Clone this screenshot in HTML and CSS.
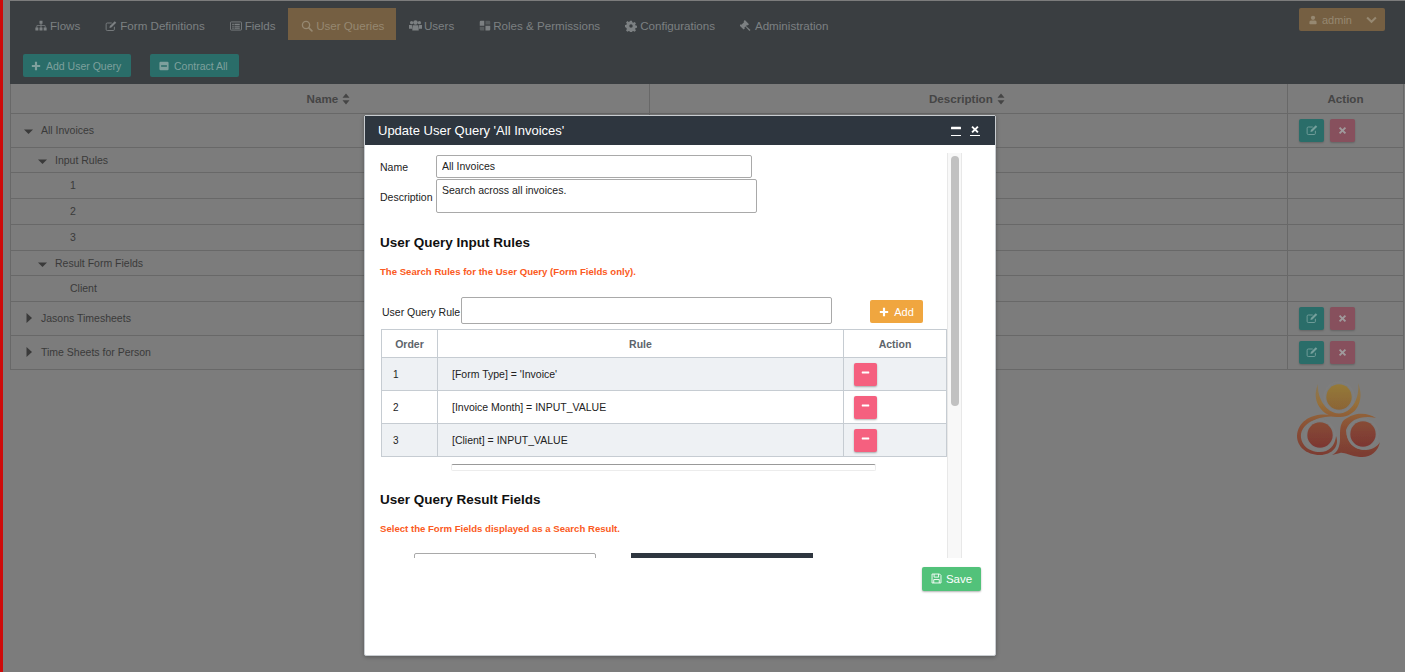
FILE: index.html
```html
<!DOCTYPE html>
<html lang="en">
<head>
    <meta charset="UTF-8">
    <title>User Queries</title>
    <link rel="stylesheet" href="styles.css">
</head>
<body>
    <svg class="defs" width="0" height="0">
        <symbol id="i-sitemap" viewBox="0 0 16 16"><path fill="currentColor" d="M6 1h4v4H8.600v2H13a1 1 0 0 1 1 1v2h1.500v4h-4v-4H13V8H8.600v2H10v4H6v-4h1.400V8H3v2h1.500v4h-4v-4H2V8a1 1 0 0 1 1-1h4.400V5H6z"/></symbol>
        <symbol id="i-edit" viewBox="0 0 16 16"><path fill="none" stroke="currentColor" stroke-width="1.200" d="M12.500 9v3.500a1.500 1.500 0 0 1-1.500 1.500H3a1.500 1.500 0 0 1-1.500-1.500v-7A1.500 1.500 0 0 1 3 4h6"/><path fill="currentColor" d="M13 1.500l2 2-6.500 6.500-2.600.6.600-2.600z"/></symbol>
        <symbol id="i-list" viewBox="0 0 16 16"><path fill="none" stroke="currentColor" stroke-width="1.200" d="M1.600 2.600h12.800a1 1 0 0 1 1 1v8.800a1 1 0 0 1-1 1H1.600a1 1 0 0 1-1-1V3.600a1 1 0 0 1 1-1z"/><path fill="currentColor" d="M3 5h2v1.500H3zM6 5h7v1.500H6zM3 7.500h2V9H3zM6 7.500h7V9H6zM3 10h2v1.500H3zM6 10h7v1.500H6z"/></symbol>
        <symbol id="i-search" viewBox="0 0 16 16"><circle cx="6.700" cy="6.700" r="4.800" fill="none" stroke="currentColor" stroke-width="1.800"/><path stroke="currentColor" stroke-width="2.200" stroke-linecap="round" d="M10.500 10.500L14.500 14.500"/></symbol>
        <symbol id="i-users" viewBox="0 0 16 16"><circle cx="3.200" cy="4.500" r="2"/><circle cx="12.800" cy="4.500" r="2"/><circle cx="8" cy="4.300" r="2.800"/><path d="M0 7.500h3.500L4 12H0zM16 7.500h-3.500L12 12h4zM4.500 7.800h7L12 14H4z"/></symbol>
        <symbol id="i-roles" viewBox="0 0 16 16"><path fill="currentColor" d="M1 2.500a1.500 1.500 0 0 1 1.500-1.500H7v6.500H1zM8.600 7.500H15v5a1.500 1.500 0 0 1-1.500 1.500H8.600z"/><path fill="currentColor" opacity=".45" d="M8.600 1h4.900A1.500 1.500 0 0 1 15 2.500V6H8.600zM1 9h6v5H2.500A1.500 1.500 0 0 1 1 12.500z"/></symbol>
        <symbol id="i-cog" viewBox="0 0 16 16"><path fill="currentColor" fill-rule="evenodd" d="M6.700 1h2.600l.4 2 1.300.6 1.800-1.100 1.800 1.800-1.100 1.800.6 1.300 1.900.4v2.600l-1.900.4-.6 1.300 1.100 1.800-1.800 1.800-1.800-1.100-1.300.5-.4 2H6.700l-.4-2-1.300-.5-1.800 1.100-1.800-1.800 1.100-1.800-.6-1.300L0 9.300V6.700l1.900-.4.600-1.300-1.100-1.800 1.800-1.800 1.800 1.100 1.300-.6zM8 5.700a2.300 2.300 0 1 0 0 4.600 2.300 2.300 0 0 0 0-4.600z"/></symbol>
        <symbol id="i-gavel" viewBox="0 0 16 16"><path fill="currentColor" d="M6.500 0l5.500 5.500-1.800 1.800-.8-.8-1.400 1.400 6 5.300-1.500 1.600-5.300-6-1.400 1.400.8.800L4.800 12.800-.7 7.300l1.800-1.800.8.800 3.700-3.700-.8-.8z"/></symbol>
        <symbol id="i-plus" viewBox="0 0 12 12"><path fill="currentColor" d="M4.700 1h2.600v3.700H11v2.600H7.300V11H4.700V7.300H1V4.700h3.700z"/></symbol>
        <symbol id="i-minus" viewBox="0 0 12 12"><rect x="1" y="4.800" width="10" height="2.400" rx=".5" fill="currentColor"/></symbol>
        <symbol id="i-minus-box" viewBox="0 0 12 12"><path fill="currentColor" fill-rule="evenodd" d="M2 1h8a1.500 1.500 0 0 1 1.500 1.500v7A1.500 1.500 0 0 1 10 11H2A1.500 1.500 0 0 1 .5 9.500v-7A1.500 1.500 0 0 1 2 1zm.5 4v2h7V5z"/></symbol>
        <symbol id="i-times" viewBox="0 0 12 12"><path fill="currentColor" d="M3 1.200L6 4.200l3-3L10.800 3l-3 3 3 3L9 10.800l-3-3-3 3L1.200 9l3-3-3-3z"/></symbol>
        <symbol id="i-user" viewBox="0 0 12 14"><circle cx="6" cy="3.800" r="3.200" fill="currentColor"/><path fill="currentColor" d="M1 8.500c1-.8 2.500-.9 5-.9s4 .1 5 .9l.5 3.500a1.500 1.500 0 0 1-1.500 1.500H2A1.500 1.500 0 0 1 .5 12z"/></symbol>
        <symbol id="i-chevron" viewBox="0 0 12 8"><path fill="none" stroke="currentColor" stroke-width="2.200" d="M1.200 1.200L6 6l4.800-4.800"/></symbol>
        <symbol id="i-sort" viewBox="0 0 8 12"><path fill="currentColor" d="M4 .5L7.500 4.800H.5zM4 11.500L.5 7.200h7z"/></symbol>
        <symbol id="i-down" viewBox="0 0 10 6" preserveAspectRatio="none"><path fill="currentColor" d="M0 .5h10L5 6z"/></symbol>
        <symbol id="i-right" viewBox="0 0 6 10" preserveAspectRatio="none"><path fill="currentColor" d="M.5 0L6 5 .5 10z"/></symbol>
        <symbol id="i-save" viewBox="0 0 16 16"><path fill="none" stroke="currentColor" stroke-width="1.300" d="M1.500 1.500h11l2 2v11h-13z"/><path fill="none" stroke="currentColor" stroke-width="1.300" d="M4.500 1.500v4.500h6.500V1.500M4 14.500V9.500h8v5"/></symbol>
    </svg>

    <div class="red-strip"></div>

    <div class="page">
        <div class="topbar">
            <div class="nav-row">
                <nav class="nav">
                    <a class="nav-item"><svg class="ico"><use href="#i-sitemap"/></svg>Flows</a>
                    <a class="nav-item"><svg class="ico"><use href="#i-edit"/></svg>Form Definitions</a>
                    <a class="nav-item"><svg class="ico"><use href="#i-list"/></svg>Fields</a>
                    <a class="nav-item active"><svg class="ico"><use href="#i-search"/></svg>User Queries</a>
                    <a class="nav-item"><svg class="ico ico-users"><use href="#i-users"/></svg>Users</a>
                    <a class="nav-item nav-roles"><svg class="ico"><use href="#i-roles"/></svg>Roles &amp; Permissions</a>
                    <a class="nav-item"><svg class="ico"><use href="#i-cog"/></svg>Configurations</a>
                    <a class="nav-item"><svg class="ico"><use href="#i-gavel"/></svg>Administration</a>
                </nav>
                <button class="admin-btn">
                    <svg class="ico-user"><use href="#i-user"/></svg>
                    <span class="admin-name">admin</span>
                    <svg class="ico-chevron"><use href="#i-chevron"/></svg>
                </button>
            </div>
            <div class="tool-row">
                <button class="tool-btn tool-add"><svg class="ico-sm"><use href="#i-plus"/></svg>Add User Query</button>
                <button class="tool-btn tool-contract"><svg class="ico-sm"><use href="#i-minus-box"/></svg>Contract All</button>
            </div>
        </div>

        <table class="grid">
            <colgroup>
                <col class="col-name"><col class="col-desc"><col class="col-act">
            </colgroup>
            <thead>
                <tr>
                    <th class="sortable">Name <svg class="sort"><use href="#i-sort"/></svg></th>
                    <th class="sortable">Description <svg class="sort"><use href="#i-sort"/></svg></th>
                    <th>Action</th>
                </tr>
            </thead>
            <tbody>
                <tr class="row-top">
                    <td class="lvl-1"><svg class="caret"><use href="#i-down"/></svg>All Invoices</td><td></td>
                    <td class="act"><button class="act-btn act-edit"><svg><use href="#i-edit"/></svg></button><button class="act-btn act-del"><svg><use href="#i-times"/></svg></button></td>
                </tr>
                <tr class="row-group"><td class="lvl-2"><svg class="caret"><use href="#i-down"/></svg>Input Rules</td><td></td><td></td></tr>
                <tr class="row-leaf"><td class="lvl-3">1</td><td></td><td></td></tr>
                <tr class="row-leaf"><td class="lvl-3">2</td><td></td><td></td></tr>
                <tr class="row-leaf"><td class="lvl-3">3</td><td></td><td></td></tr>
                <tr class="row-group"><td class="lvl-2"><svg class="caret"><use href="#i-down"/></svg>Result Form Fields</td><td></td><td></td></tr>
                <tr class="row-leaf"><td class="lvl-3">Client</td><td></td><td></td></tr>
                <tr class="row-top">
                    <td class="lvl-1"><svg class="caret-r"><use href="#i-right"/></svg>Jasons Timesheets</td><td></td>
                    <td class="act"><button class="act-btn act-edit"><svg><use href="#i-edit"/></svg></button><button class="act-btn act-del"><svg><use href="#i-times"/></svg></button></td>
                </tr>
                <tr class="row-top">
                    <td class="lvl-1"><svg class="caret-r"><use href="#i-right"/></svg>Time Sheets for Person</td><td></td>
                    <td class="act"><button class="act-btn act-edit"><svg><use href="#i-edit"/></svg></button><button class="act-btn act-del"><svg><use href="#i-times"/></svg></button></td>
                </tr>
            </tbody>
        </table>

        <div class="logo-row">
            <svg class="logo" viewBox="0 0 90 80">
                <defs>
                    <linearGradient id="swirl" gradientUnits="userSpaceOnUse" x1="0" y1="0" x2="0" y2="78">
                        <stop offset="0" stop-color="#85785e"/>
                        <stop offset=".3" stop-color="#96703a"/>
                        <stop offset=".6" stop-color="#8a5036"/>
                        <stop offset="1" stop-color="#7b3a32"/>
                    </linearGradient>
                    <linearGradient id="ball-top" x1="0" y1="0" x2="0" y2="1">
                        <stop offset="0" stop-color="#957a38"/>
                        <stop offset="1" stop-color="#8b6436"/>
                    </linearGradient>
                    <linearGradient id="ball-low" x1="0" y1="0" x2="0" y2="1">
                        <stop offset="0" stop-color="#874c36"/>
                        <stop offset="1" stop-color="#7c3632"/>
                    </linearGradient>
                    <filter id="soft"><feGaussianBlur stdDeviation=".5"/></filter>
                </defs>
                <g filter="url(#soft)">
                    <path fill="url(#swirl)" d="M24 4C16 22 30 38 45 37 60 38 72 22 64 3 66 18 58 33 45 33.500 32 33 23 18 24 4z"/>
                    <path fill="url(#swirl)" d="M3 56C4 38 24 30 46 37 30 35 10 40 7 54 6 64 14 72 26 72 35 72 41 66 42 56 46 66 38 75 26 75 12 75 3 66 3 56z"/>
                    <path fill="url(#swirl)" d="M50 40C62 31 74 33 82 38 70 35 56 38 52 50 52 62 60 70 72 70 78 70 84 66 86 62 84 72 76 78 66 77 56 76 50 72 46 73L38 75C44 72 46 66 46 58 46 50 46 44 50 40z"/>
                    <circle cx="45" cy="17" r="14.800" fill="none" stroke="#7e7e7e" stroke-width="1.800"/>
                    <circle cx="26" cy="55" r="14.800" fill="none" stroke="#7e7e7e" stroke-width="1.800"/>
                    <circle cx="69" cy="54" r="14.800" fill="none" stroke="#7e7e7e" stroke-width="1.800"/>
                    <circle cx="45" cy="17" r="12.700" fill="url(#ball-top)"/>
                    <circle cx="26" cy="55" r="12.700" fill="url(#ball-low)"/>
                    <circle cx="69" cy="54" r="12.700" fill="url(#ball-low)"/>
                </g>
            </svg>
        </div>
    </div>

    <div class="modal">
        <div class="modal-head">
            <span class="modal-title">Update User Query 'All Invoices'</span>
            <span class="modal-ctrl ctrl-min"><svg><use href="#i-minus"/></svg></span>
            <span class="modal-ctrl"><svg><use href="#i-times"/></svg></span>
        </div>
        <div class="modal-scroll">
            <div class="form-line">
                <label class="lbl">Name</label>
                <input class="inp inp-name" type="text" value="All Invoices">
            </div>
            <div class="form-line form-line-desc">
                <label class="lbl">Description</label>
                <textarea class="inp inp-desc">Search across all invoices.</textarea>
            </div>

            <h3 class="sec-title sec-rules">User Query Input Rules</h3>
            <p class="sec-note note-rules">The Search Rules for the User Query (Form Fields only).</p>

            <div class="rule-line">
                <label class="lbl-rule">User Query Rule</label>
                <input class="inp inp-rule" type="text">
                <button class="add-btn"><svg><use href="#i-plus"/></svg>Add</button>
            </div>

            <table class="rules">
                <colgroup>
                    <col class="r-order"><col class="r-rule"><col class="r-act">
                </colgroup>
                <thead>
                    <tr><th>Order</th><th>Rule</th><th>Action</th></tr>
                </thead>
                <tbody>
                    <tr class="odd"><td class="r-num">1</td><td class="r-text">[Form Type] = 'Invoice'</td><td class="r-btn"><button class="rm-btn"><svg><use href="#i-minus"/></svg></button></td></tr>
                    <tr><td class="r-num">2</td><td class="r-text">[Invoice Month] = INPUT_VALUE</td><td class="r-btn"><button class="rm-btn"><svg><use href="#i-minus"/></svg></button></td></tr>
                    <tr class="odd"><td class="r-num">3</td><td class="r-text">[Client] = INPUT_VALUE</td><td class="r-btn"><button class="rm-btn"><svg><use href="#i-minus"/></svg></button></td></tr>
                </tbody>
            </table>

            <div class="thin-select"></div>

            <h3 class="sec-title sec-result">User Query Result Fields</h3>
            <p class="sec-note note-result">Select the Form Fields displayed as a Search Result.</p>

            <div class="pick-row">
                <div class="pick-list"></div>
                <div class="pick-head"></div>
            </div>

            <div class="scroll-track"><div class="scroll-thumb"></div></div>
        </div>
        <div class="modal-foot">
            <button class="save-btn"><svg><use href="#i-save"/></svg>Save</button>
        </div>
    </div>
</body>
</html>
```

FILE: styles.css
```css
* {
    box-sizing: border-box;
}
html, body {
    height: 100%;
}
body {
    margin: 0;
    display: flex;
    overflow: hidden;
    background-color: #7c7c7c;
    font-family: "Liberation Sans", Arial, sans-serif;
    font-size: 10.5px;
    color: #3a3a3a;
}
button {
    font-family: inherit;
    border: none;
    padding: 0;
}
.defs {
    position: absolute;
}
.red-strip {
    width: 3px;
    flex: none;
    background-color: #cf0a0a;
}
.page {
    flex: 1;
    min-width: 0;
    padding: 1px 2px 0 7px;
}

/* top bar */
.topbar {
    height: 83px;
    margin-right: -2px;
    background-color: #3a3e41;
}
.nav-row {
    display: flex;
    justify-content: space-between;
    padding-top: 7px;
    height: 53px;
}
.nav {
    display: flex;
    height: 32px;
    padding-left: 12.5px;
}
.nav-item {
    display: flex;
    align-items: center;
    padding: 3px 12.5px 0;
    font-size: 11.6px;
    color: #7c8082;
    white-space: nowrap;
}
.nav-item.active {
    padding-left: 13px;
    padding-right: 12px;
    background-color: #755f42;
    color: #968871;
}
.ico {
    width: 12px;
    height: 12px;
    margin-right: 3px;
    fill: currentColor;
}
.ico-users {
    width: 13px;
    height: 13px;
    margin-right: 2px;
}
.nav-roles .ico {
    margin-right: 2px;
}
.admin-btn {
    display: flex;
    align-items: center;
    width: 86px;
    height: 23px;
    margin-right: 20px;
    padding-left: 10px;
    background-color: #755f42;
    border-radius: 2px;
    color: #968871;
    font-size: 11px;
}
.ico-user {
    width: 8px;
    height: 10px;
}
.admin-name {
    margin-left: 5px;
}
.ico-chevron {
    width: 11px;
    height: 8px;
    margin-left: 14px;
}
.tool-row {
    display: flex;
    gap: 19px;
    padding-left: 13px;
}
.tool-btn {
    display: flex;
    align-items: center;
    gap: 5px;
    height: 23px;
    padding: 0 8px;
    background-color: #2a6d69;
    border-radius: 2px;
    color: #7ea09d;
    font-size: 10.5px;
    white-space: nowrap;
}
.ico-sm {
    width: 10px;
    height: 10px;
    flex: none;
}
.tool-add { width: 108px; }
.tool-contract {
    width: 89px;
    padding-left: 9px;
}

/* main grid */
.grid {
    width: 1393px;
    table-layout: fixed;
    border-collapse: collapse;
    border: 1px solid #686868;
    border-top: none;
}
.col-name { width: 639px; }
.col-desc { width: 638px; }
.col-act { width: 116px; }
.grid th, .grid td {
    border: 1px solid #686868;
    padding: 0;
}
.grid thead tr {
    height: 29px;
}
.grid th {
    border-top: none;
    padding-top: 1px;
    font-size: 11.6px;
    font-weight: bold;
    color: #454545;
}
.grid .sortable {
    padding-right: 3px;
}
.sort {
    width: 8px;
    height: 12px;
    margin-left: 1px;
    vertical-align: -2px;
}
.row-top { height: 34px; }
.row-group { height: 25px; }
.row-leaf { height: 26px; }
.grid .lvl-1 { padding-left: 13px; }
.grid .lvl-2 { padding-left: 27px; }
.grid .lvl-3 { padding-left: 59px; }
.caret {
    width: 9px;
    height: 5px;
    margin-right: 8px;
    vertical-align: 0;
}
.caret-r {
    width: 6px;
    height: 10px;
    margin-left: 2px;
    margin-right: 9px;
    vertical-align: -1px;
}
.grid .act {
    padding-left: 11px;
}
.act-btn {
    display: inline-flex;
    align-items: center;
    justify-content: center;
    width: 25px;
    height: 23px;
    margin-right: 6px;
    border-radius: 2px;
    vertical-align: middle;
    box-shadow: 0 1px 2px rgba(0, 0, 0, 0.2);
}
.act-edit {
    background-color: #2a6d69;
    color: #76a09d;
}
.act-edit svg {
    width: 12px;
    height: 12px;
}
.act-del {
    background-color: #87505d;
    color: #a09a9c;
}
.act-del svg {
    width: 9px;
    height: 9px;
}

/* logo */
.logo-row {
    display: flex;
    justify-content: flex-end;
    padding: 10px 19px 0 0;
}
.logo {
    width: 90px;
    height: 80px;
}

/* modal */
.modal {
    position: absolute;
    left: 364px;
    top: 115px;
    width: 632px;
    height: 541px;
    background-color: #fff;
    border: 1px solid #c8ccd0;
    border-radius: 2px;
    box-shadow: 0 1px 4px rgba(0, 0, 0, 0.3);
}
.modal-head {
    display: flex;
    align-items: center;
    height: 29px;
    padding: 0 15px 0 13px;
    background-color: #2e363f;
    color: #fff;
}
.modal-title {
    flex: 1;
    font-size: 13px;
}
.modal-ctrl {
    display: block;
    width: 10px;
    height: 11px;
    margin-left: 9px;
    border-bottom: 1px solid #fff;
}
.modal-ctrl svg {
    display: block;
    width: 10px;
    height: 9px;
}
.ctrl-min svg {
    width: 12px;
    height: 12px;
    margin: -3px 0 0 -1px;
}
.modal-scroll {
    position: relative;
    height: 413px;
    overflow: hidden;
    padding: 10px 0 0 15px;
    color: #222;
}
.form-line {
    display: flex;
    align-items: center;
}
.form-line-desc {
    margin-top: 1px;
    align-items: flex-start;
}
.lbl {
    width: 56px;
    flex: none;
}
.form-line-desc .lbl {
    margin-top: 12px;
}
.inp {
    border: 1px solid #a9a9a9;
    border-radius: 2px;
    background: #fff;
    font-family: inherit;
    font-size: 10.5px;
    color: #222;
    padding: 0 5px;
}
.inp-name {
    width: 316px;
    height: 23px;
    padding-bottom: 2px;
}
.inp-desc {
    width: 321px;
    height: 34px;
    padding-top: 4px;
    resize: none;
    display: block;
}
.sec-title {
    margin: 0;
    font-size: 13.5px;
    font-weight: bold;
    color: #111;
    line-height: 16px;
}
.sec-rules {
    margin-top: 22px;
}
.sec-note {
    margin: 0;
    font-size: 9.6px;
    font-weight: bold;
    color: #fb5a22;
    line-height: 12px;
}
.note-rules {
    margin-top: 15px;
}
.rule-line {
    display: flex;
    align-items: center;
    margin: 19px 0 0 2px;
    height: 27px;
}
.lbl-rule {
    width: 79px;
    flex: none;
    padding-top: 3px;
    white-space: nowrap;
}
.inp-rule {
    width: 371px;
    height: 27px;
}
.add-btn {
    display: flex;
    align-items: center;
    justify-content: center;
    gap: 5px;
    width: 53px;
    height: 23px;
    margin: 2px 0 0 38px;
    background-color: #f0a63f;
    border-radius: 2px;
    color: #fff;
    font-size: 11px;
}
.add-btn svg {
    width: 10px;
    height: 10px;
}
.rules {
    width: 566px;
    margin: 5px 0 0 1px;
    table-layout: fixed;
    border-collapse: collapse;
    border: 1px solid #c6ccd2;
}
.r-order { width: 56px; }
.r-act { width: 103px; }
.rules th, .rules td {
    border: 1px solid #c6ccd2;
    padding: 0;
}
.rules thead tr {
    height: 28px;
}
.rules tbody tr {
    height: 33px;
}
.rules th {
    font-size: 10.5px;
    font-weight: bold;
    color: #5d646b;
}
.rules .odd {
    background-color: #eef1f4;
}
.rules .r-num {
    padding-left: 11px;
    font-size: 10px;
}
.rules .r-text {
    padding-left: 14px;
}
.rules .r-btn {
    padding-left: 10px;
}
.rm-btn {
    display: flex;
    align-items: center;
    justify-content: center;
    width: 23px;
    height: 23px;
    background-color: #f5607f;
    border-radius: 2px;
    color: #fff;
    box-shadow: 0 1px 2px rgba(0, 0, 0, 0.3);
}
.rm-btn svg {
    width: 9px;
    height: 9px;
    margin-top: -4px;
}
.thin-select {
    width: 425px;
    height: 7px;
    margin: 7px 0 0 71px;
    border: 1px solid #ececec;
    border-top: 1px solid #999;
    border-radius: 2px;
}
.sec-result {
    margin-top: 21px;
}
.note-result {
    margin-top: 15px;
}
.pick-row {
    display: flex;
    gap: 35px;
    margin: 18px 0 0 34px;
}
.pick-list {
    width: 182px;
    height: 40px;
    border: 1px solid #a9a9a9;
    border-radius: 2px;
}
.pick-head {
    width: 182px;
    height: 40px;
    background-color: #2e363f;
}
.scroll-track {
    position: absolute;
    left: 582px;
    top: 8px;
    bottom: 0;
    width: 15px;
    background-color: #f8f8f8;
    border-left: 1px solid #e8e8e8;
    border-right: 1px solid #e8e8e8;
}
.scroll-thumb {
    width: 8px;
    height: 250px;
    margin: 3px 0 0 3px;
    background-color: #c1c1c1;
    border-radius: 4px;
}
.modal-foot {
    display: flex;
    justify-content: flex-end;
    padding: 9px 14px 0 0;
}
.save-btn {
    display: flex;
    align-items: center;
    justify-content: center;
    gap: 4px;
    width: 59px;
    height: 24px;
    background-color: #52c27a;
    border-radius: 2px;
    color: #fff;
    font-size: 11.5px;
    box-shadow: 0 1px 2px rgba(0, 0, 0, 0.3);
}
.save-btn svg {
    width: 11px;
    height: 11px;
    margin-top: -2px;
}
```
